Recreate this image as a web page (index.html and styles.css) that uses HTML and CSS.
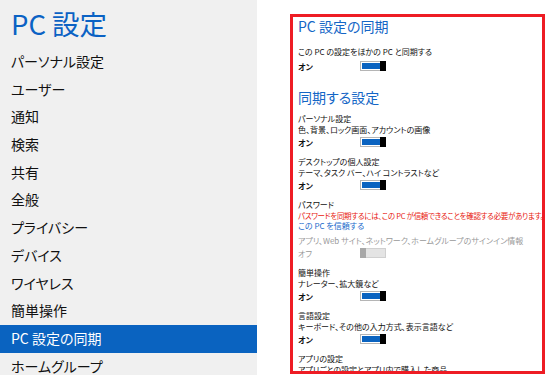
FILE: index.html
```html
<!DOCTYPE html>
<html lang="ja">
<head>
  <meta charset="UTF-8">
  <title>PC 設定</title>
  <link rel="stylesheet" href="styles.css">
</head>
<body>
  <aside class="side">
    <h1 class="side-title">PC 設定</h1>
    <ul class="nav">
      <li>パーソナル設定</li>
      <li>ユーザー</li>
      <li>通知</li>
      <li>検索</li>
      <li>共有</li>
      <li>全般</li>
      <li>プライバシー</li>
      <li>デバイス</li>
      <li>ワイヤレス</li>
      <li>簡単操作</li>
      <li class="active">PC 設定の同期</li>
      <li>ホームグループ</li>
    </ul>
  </aside>
  <main class="main">
    <section class="box">
      <h2 class="heading">PC 設定の同期</h2>
      <div class="group first">
        <div class="label">この PC の設定をほかの PC と同期する</div>
        <div class="state"><b>オン</b><span class="toggle on"></span></div>
      </div>

      <h2 class="heading sub">同期する設定</h2>
      <div class="group">
        <div class="label">パーソナル設定</div>
        <div class="label">色、背景、ロック画面、アカウントの画像</div>
        <div class="state"><b>オン</b><span class="toggle on"></span></div>
      </div>
      <div class="group">
        <div class="label">デスクトップの個人設定</div>
        <div class="label">テーマ、タスク バー、ハイ コントラストなど</div>
        <div class="state"><b>オン</b><span class="toggle on"></span></div>
      </div>
      <div class="group">
        <div class="label">パスワード</div>
        <div class="label warn">パスワードを同期するには、この PC が信頼できることを確認する必要があります。</div>
        <div class="label link">この PC を信頼する</div>
        <div class="label gray note">アプリ、Web サイト、ネットワーク、ホームグループのサインイン情報</div>
        <div class="state gray"><span>オフ</span><span class="toggle off"></span></div>
      </div>
      <div class="group">
        <div class="label">簡単操作</div>
        <div class="label">ナレーター、拡大鏡など</div>
        <div class="state"><b>オン</b><span class="toggle on"></span></div>
      </div>
      <div class="group">
        <div class="label">言語設定</div>
        <div class="label">キーボード、その他の入力方式、表示言語など</div>
        <div class="state"><b>オン</b><span class="toggle on"></span></div>
      </div>
      <div class="group">
        <div class="label">アプリの設定</div>
        <div class="label">アプリごとの設定とアプリ内で購入した商品</div>
      </div>
    </section>
  </main>
</body>
</html>
```

FILE: styles.css
```css
body {
  margin: 0;
  display: flex;
  height: 375px;
  overflow: hidden;
  font-family: "Noto Sans CJK JP", "Noto Sans", sans-serif;
  font-feature-settings: "palt";
  color: #111;
  background: #fff;
}
.side {
  width: 257px;
  flex-shrink: 0;
  background: #f0f0f0;
}
.side-title {
  margin: 0;
  padding: 6px 0 0 11px;
  height: 48px;
  box-sizing: border-box;
  font-size: 27.5px;
  font-weight: normal;
  line-height: 34px;
  color: #0b62c4;
}
.nav {
  list-style: none;
  margin: 0;
  padding: 0;
}
.nav li {
  height: 27.7px;
  line-height: 27.7px;
  padding-left: 11px;
  font-size: 14px;
}
.nav li.active {
  background: #0a63c0;
  color: #fff;
}
.main {
  flex: 1;
  padding: 14px 0 0 33px;
}
.box {
  width: 255px;
  height: 360px;
  box-sizing: border-box;
  border: 3px solid #ee1c24;
  padding: 0 0 0 5px;
  overflow: hidden;
}
.heading {
  margin: 0;
  font-size: 14px;
  font-weight: normal;
  line-height: 18px;
  color: #1466c6;
}
.heading.sub {
  margin-top: 15px;
}
.group {
  margin-top: 7px;
}
.group.first {
  margin-top: 11px;
}
.group.first .state {
  margin-top: 2px;
}
.label {
  font-size: 8px;
  line-height: 11px;
  white-space: nowrap;
}
.warn {
  color: #e8190f;
  font-size: 7.5px;
  letter-spacing: -0.3px;
}
.link {
  color: #1a6acb;
  line-height: 10px;
}
.gray {
  color: #9a9a9a;
}
.note {
  margin-top: 4px;
}
.state {
  display: flex;
  align-items: center;
  height: 14px;
  font-size: 8px;
}
.state b,
.state span:first-child {
  width: 62px;
}
.toggle {
  width: 22px;
  height: 6px;
  border: 1px solid #b5b5b5;
  background: #fff;
  padding: 1px;
  display: flex;
}
.toggle.on::before {
  content: "";
  flex: 1;
  background: #0a63c0;
}
.toggle.on::after {
  content: "";
  width: 6px;
  margin: -2px -2px -2px 0;
  background: #000;
}
.toggle.off {
  background: #e4e4e4;
  border-color: #d0d0d0;
}
.toggle.off::before {
  content: "";
  width: 6px;
  margin: -2px 0 -2px -2px;
  background: #a8a8a8;
}
```
